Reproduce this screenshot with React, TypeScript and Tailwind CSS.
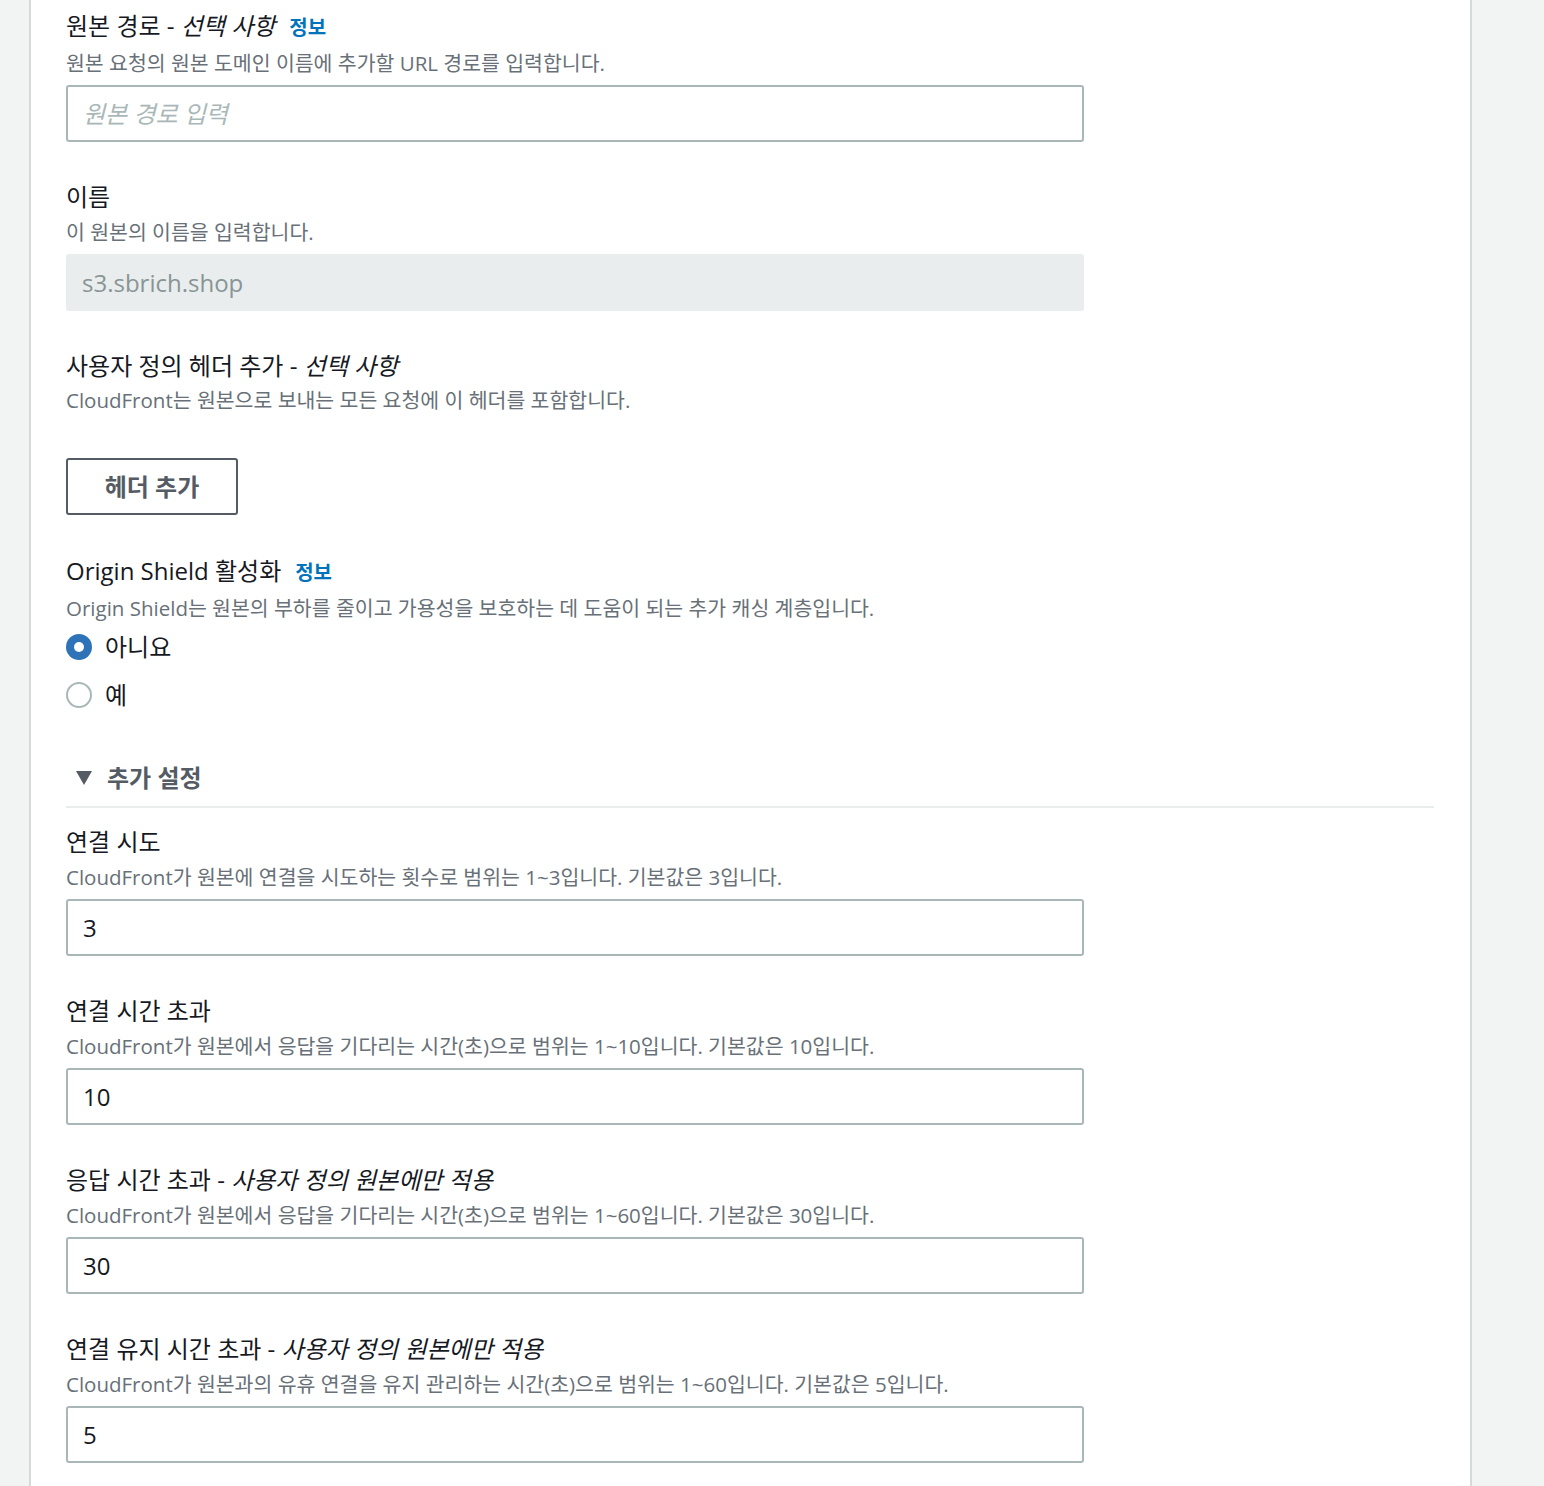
import { useState } from "react"

const font = "font-['Open_Sans','Noto_Sans_CJK_KR',sans-serif]"

function Info() {
  return <span className="ml-[14px] text-[20px] font-bold text-[#0073bb] not-italic">정보</span>
}

function Field(props: {
  label: React.ReactNode
  desc: string
  value?: string
  placeholder?: string
  disabled?: boolean
}) {
  return (
    <div className="mb-[39px]">
      <div className="text-[24px] leading-[32px] text-[#16191f] mb-[5px]">{props.label}</div>
      <div className="text-[20.5px] leading-[28px] text-[#687078] mb-[8px]">{props.desc}</div>
      {props.disabled ? (
        <div className="w-[1018px] h-[57px] rounded-[3px] bg-[#eaeded] flex items-center px-[16px] text-[24px] text-[#879596]">
          {props.value}
        </div>
      ) : (
        <input
          defaultValue={props.value}
          placeholder={props.placeholder}
          className={`w-[1018px] h-[57px] rounded-[3px] border-2 border-[#aab7b8] px-[15px] text-[24px] text-[#16191f] placeholder:italic placeholder:text-[#aab7b8] outline-none ${font}`}
        />
      )}
    </div>
  )
}

function Radio(props: { checked: boolean; label: string; onClick: () => void }) {
  return (
    <div className="h-[48px] flex items-center cursor-pointer" onClick={props.onClick}>
      {props.checked ? (
        <span className="w-[26px] h-[26px] rounded-full bg-[#2e73b8] flex items-center justify-center">
          <span className="w-[10px] h-[10px] rounded-full bg-white" />
        </span>
      ) : (
        <span className="w-[26px] h-[26px] rounded-full border-2 border-[#aab7b8] bg-white" />
      )}
      <span className="ml-[13px] text-[24px] text-[#16191f]">{props.label}</span>
    </div>
  )
}

export default function App() {
  const [shield, setShield] = useState(false)

  return (
    <div className={`min-h-[1486px] bg-[#f2f3f3] pl-[29px] pr-[72px] ${font}`}>
      <div className="min-h-[1486px] bg-white border-x-2 border-[#d5dbdb] pl-[35px] pr-[36px] pt-[10px]">
        <Field
          label={<>원본 경로 - <i>선택 사항</i><Info /></>}
          desc="원본 요청의 원본 도메인 이름에 추가할 URL 경로를 입력합니다."
          placeholder="원본 경로 입력"
        />
        <Field label="이름" desc="이 원본의 이름을 입력합니다." value="s3.sbrich.shop" disabled />

        {/* custom headers */}
        <div className="mb-[40px]">
          <div className="text-[24px] leading-[32px] text-[#16191f] mb-[4px]">
            사용자 정의 헤더 추가 - <i>선택 사항</i>
          </div>
          <div className="text-[20.5px] leading-[28px] text-[#687078] mb-[44px]">
            CloudFront는 원본으로 보내는 모든 요청에 이 헤더를 포함합니다.
          </div>
          <button className="w-[172px] h-[57px] rounded-[3px] border-2 border-[#545b64] text-[24px] font-bold text-[#545b64]">
            헤더 추가
          </button>
        </div>

        {/* origin shield */}
        <div>
          <div className="text-[24px] leading-[32px] text-[#16191f] mb-[5px]">
            Origin Shield 활성화<Info />
          </div>
          <div className="text-[20.5px] leading-[28px] text-[#687078] mb-[1px]">
            Origin Shield는 원본의 부하를 줄이고 가용성을 보호하는 데 도움이 되는 추가 캐싱 계층입니다.
          </div>
          <Radio checked={!shield} label="아니요" onClick={() => setShield(false)} />
          <Radio checked={shield} label="예" onClick={() => setShield(true)} />
        </div>

        {/* additional settings */}
        <div className="mt-[39px] h-[40px] flex items-center text-[#545b64]">
          <svg width="16" height="14" viewBox="0 0 16 14" className="ml-[10px]">
            <path d="M0 0 L16 0 L8 14 Z" fill="#545b64" />
          </svg>
          <span className="ml-[15px] text-[24px] font-bold">추가 설정</span>
        </div>
        <div className="mt-[8px] mb-[18px] border-t-2 border-[#eaeded]" />

        <Field
          label="연결 시도"
          desc="CloudFront가 원본에 연결을 시도하는 횟수로 범위는 1~3입니다. 기본값은 3입니다."
          value="3"
        />
        <Field
          label="연결 시간 초과"
          desc="CloudFront가 원본에서 응답을 기다리는 시간(초)으로 범위는 1~10입니다. 기본값은 10입니다."
          value="10"
        />
        <Field
          label={<>응답 시간 초과 - <i>사용자 정의 원본에만 적용</i></>}
          desc="CloudFront가 원본에서 응답을 기다리는 시간(초)으로 범위는 1~60입니다. 기본값은 30입니다."
          value="30"
        />
        <Field
          label={<>연결 유지 시간 초과 - <i>사용자 정의 원본에만 적용</i></>}
          desc="CloudFront가 원본과의 유휴 연결을 유지 관리하는 시간(초)으로 범위는 1~60입니다. 기본값은 5입니다."
          value="5"
        />
      </div>
    </div>
  )
}
